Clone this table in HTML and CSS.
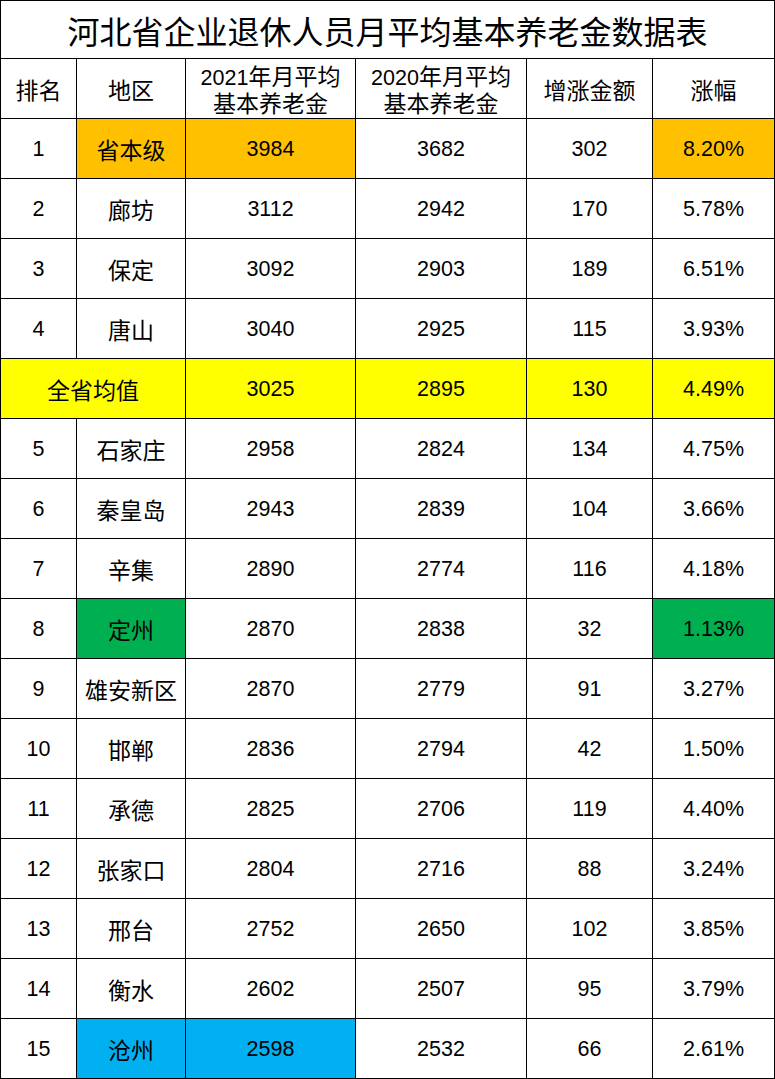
FILE: index.html
```html
<!DOCTYPE html>
<html lang="zh">
<head>
<meta charset="utf-8">
<title>河北省企业退休人员月平均基本养老金数据表</title>
<link rel="stylesheet" href="styles.css">
</head>
<body>
<table class="sheet">
  <colgroup>
    <col class="c1"><col class="c2"><col class="c3"><col class="c4"><col class="c5"><col class="c6">
  </colgroup>
  <thead>
    <tr class="title-row"><th colspan="6" class="title">河北省企业退休人员月平均基本养老金数据表</th></tr>
    <tr class="head-row">
      <th class="zh">排名</th>
      <th class="zh">地区</th>
      <th><div class="hl">2021<span class="zh">年月平均</span></div><div class="hl zh">基本养老金</div></th>
      <th><div class="hl">2020<span class="zh">年月平均</span></div><div class="hl zh">基本养老金</div></th>
      <th class="zh">增涨金额</th>
      <th class="zh">涨幅</th>
    </tr>
  </thead>
  <tbody>
    <tr><td>1</td><td class="zh orange">省本级</td><td class="orange">3984</td><td>3682</td><td>302</td><td class="orange">8.20%</td></tr>
    <tr><td>2</td><td class="zh">廊坊</td><td>3112</td><td>2942</td><td>170</td><td>5.78%</td></tr>
    <tr><td>3</td><td class="zh">保定</td><td>3092</td><td>2903</td><td>189</td><td>6.51%</td></tr>
    <tr><td>4</td><td class="zh">唐山</td><td>3040</td><td>2925</td><td>115</td><td>3.93%</td></tr>
    <tr class="yellow"><td colspan="2" class="zh">全省均值</td><td>3025</td><td>2895</td><td>130</td><td>4.49%</td></tr>
    <tr><td>5</td><td class="zh">石家庄</td><td>2958</td><td>2824</td><td>134</td><td>4.75%</td></tr>
    <tr><td>6</td><td class="zh">秦皇岛</td><td>2943</td><td>2839</td><td>104</td><td>3.66%</td></tr>
    <tr><td>7</td><td class="zh">辛集</td><td>2890</td><td>2774</td><td>116</td><td>4.18%</td></tr>
    <tr><td>8</td><td class="zh green">定州</td><td>2870</td><td>2838</td><td>32</td><td class="green">1.13%</td></tr>
    <tr><td>9</td><td class="zh">雄安新区</td><td>2870</td><td>2779</td><td>91</td><td>3.27%</td></tr>
    <tr><td>10</td><td class="zh">邯郸</td><td>2836</td><td>2794</td><td>42</td><td>1.50%</td></tr>
    <tr><td>11</td><td class="zh">承德</td><td>2825</td><td>2706</td><td>119</td><td>4.40%</td></tr>
    <tr><td>12</td><td class="zh">张家口</td><td>2804</td><td>2716</td><td>88</td><td>3.24%</td></tr>
    <tr><td>13</td><td class="zh">邢台</td><td>2752</td><td>2650</td><td>102</td><td>3.85%</td></tr>
    <tr><td>14</td><td class="zh">衡水</td><td>2602</td><td>2507</td><td>95</td><td>3.79%</td></tr>
    <tr><td>15</td><td class="zh blue">沧州</td><td class="blue">2598</td><td>2532</td><td>66</td><td>2.61%</td></tr>
  </tbody>
</table>
</body>
</html>
```

FILE: styles.css
```css
html, body {
  margin: 0;
  padding: 0;
  background: #ffffff;
}

.sheet {
  width: 775px;
  border-collapse: separate;
  border-spacing: 0;
  table-layout: fixed;
  border-left: 1px solid #000000;
  border-top: 1px solid #000000;
  font-family: "Liberation Sans", "Noto Sans CJK SC", sans-serif;
  font-size: 21.5px;
  color: #000000;
}

.c1 { width: 76px; }
.c2 { width: 109px; }
.c3 { width: 170px; }
.c4 { width: 171px; }
.c5 { width: 126px; }
.c6 { width: 122px; }

.sheet th,
.sheet td {
  border-right: 1px solid #000000;
  border-bottom: 1px solid #000000;
  padding: 0;
  text-align: center;
  vertical-align: middle;
  font-weight: normal;
  height: 60px;
  box-sizing: border-box;
  line-height: 26px;
}

.hl {
  height: 27px;
  line-height: 27px;
  white-space: nowrap;
}

.sheet .title-row th {
  height: 58px;
}

.title {
  font-family: "Noto Sans CJK SC", sans-serif;
  font-size: 32px;
  line-height: 40px;
  padding-top: 2px;
}

.zh {
  font-family: "Noto Sans CJK SC", sans-serif;
  font-size: 23px;
}

.orange { background: #ffc000; }
.yellow td { background: #ffff00; }
.green { background: #00b050; }
.blue { background: #00b0f0; }
```
